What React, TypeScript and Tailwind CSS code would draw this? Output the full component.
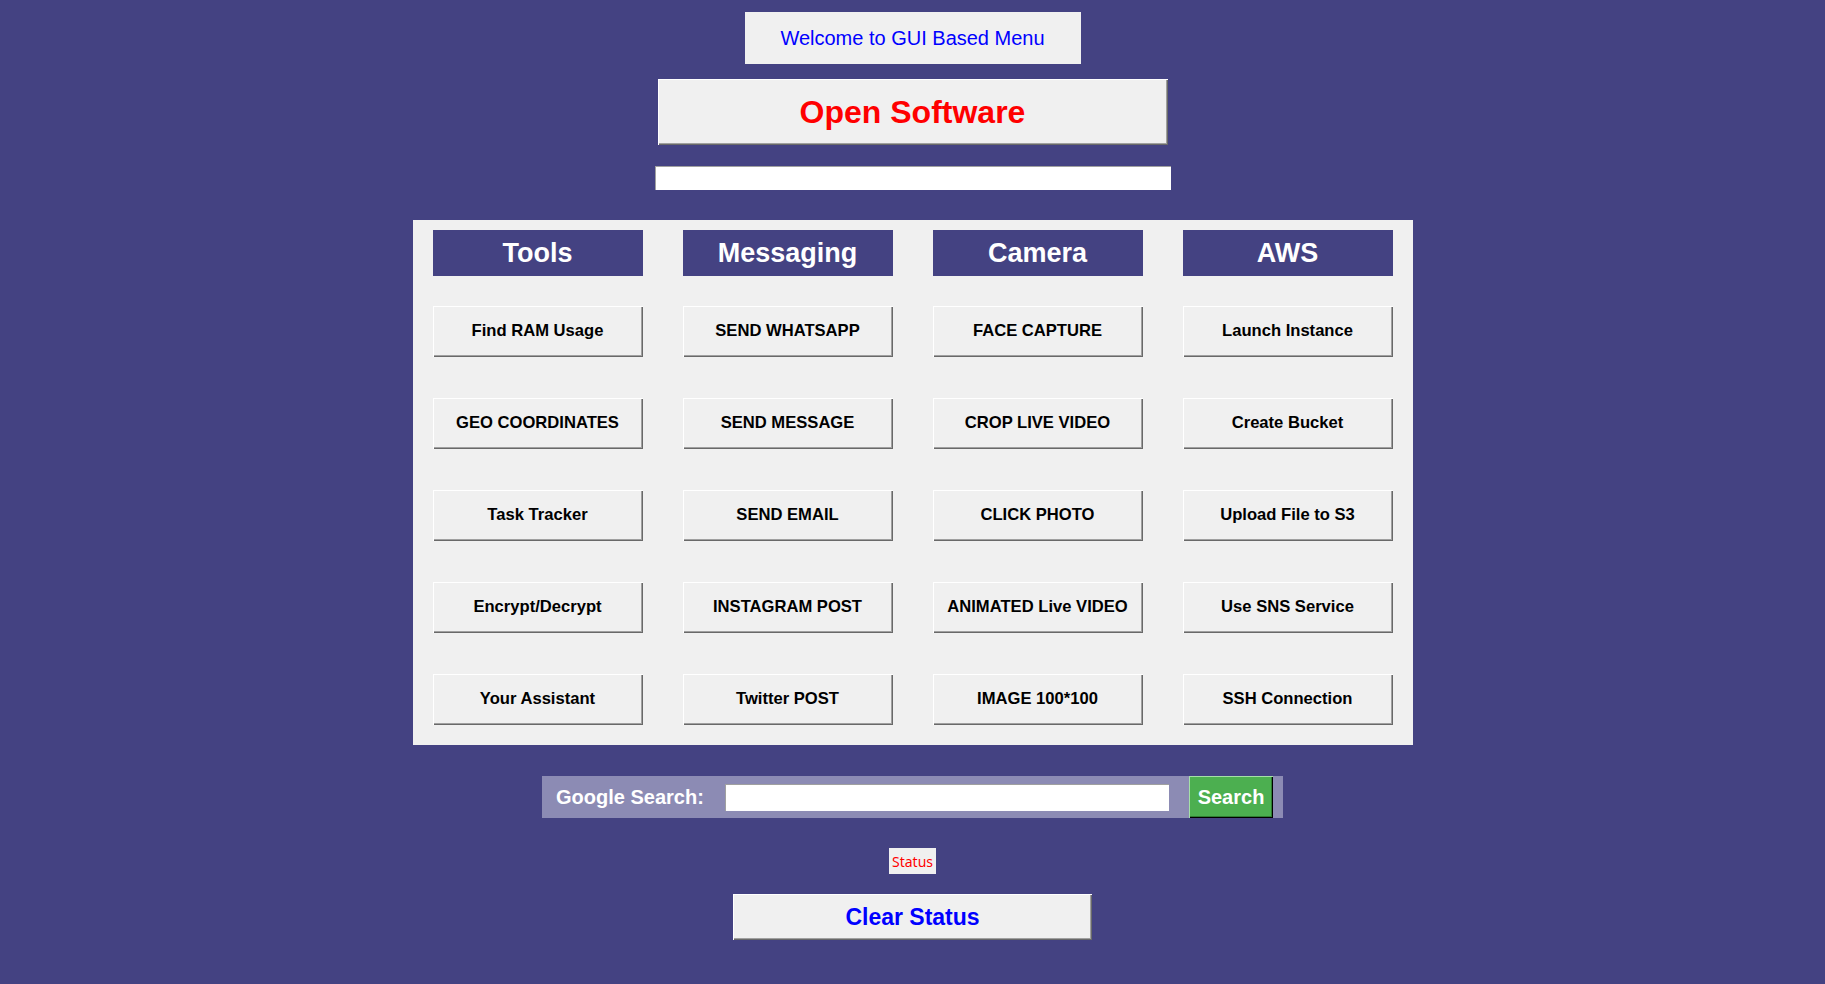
import React from "react";

const columns: { title: string; items: string[] }[] = [
  { title: "Tools", items: ["Find RAM Usage", "GEO COORDINATES", "Task Tracker", "Encrypt/Decrypt", "Your Assistant"] },
  { title: "Messaging", items: ["SEND WHATSAPP", "SEND MESSAGE", "SEND EMAIL", "INSTAGRAM POST", "Twitter POST"] },
  { title: "Camera", items: ["FACE CAPTURE", "CROP LIVE VIDEO", "CLICK PHOTO", "ANIMATED Live VIDEO", "IMAGE 100*100"] },
  { title: "AWS", items: ["Launch Instance", "Create Bucket", "Upload File to S3", "Use SNS Service", "SSH Connection"] },
];

const relief =
  "shadow-[inset_1px_1px_0_#ffffff,inset_-1px_-1px_0_#696969,inset_-2px_-2px_0_#a0a0a0]";

export default function App() {
  return (
    <div
      className="min-h-[984px] w-full bg-[#444282] flex flex-col items-center"
      style={{ fontFamily: '"Liberation Sans", Arial, sans-serif' }}
    >
      <div className="mt-[12px] w-[336px] h-[52px] bg-[#f0f0f0] flex items-center justify-center text-[20px] text-[#0000ff]">
        Welcome to GUI Based Menu
      </div>

      <button
        className={`mt-[15px] w-[510px] h-[66px] bg-[#f0f0f0] flex items-center justify-center text-[32px] font-bold text-[#ff0000] ${relief}`}
      >
        Open Software
      </button>

      <div className="mt-[21px] w-[516px] h-[24px] bg-white border-t border-l border-[#a0a0a0]" />

      <div className="mt-[30px] w-[1000px] bg-[#f0f0f0] px-[20px] pt-[10px] pb-[20px] grid grid-cols-4 gap-x-[40px]">
        {columns.map((col) => (
          <div key={col.title} className="flex flex-col">
            <div className="h-[46px] bg-[#444282] text-white font-bold text-[27px] flex items-center justify-center">
              {col.title}
            </div>
            <div className="mt-[30px] flex flex-col gap-[41px]">
              {col.items.map((it) => (
                <button
                  key={it}
                  className={`h-[51px] w-full bg-[#f0f0f0] flex items-center justify-center text-[16.6px] font-bold text-black ${relief}`}
                >
                  {it}
                </button>
              ))}
            </div>
          </div>
        ))}
      </div>

      <div className="mt-[31px] w-[741px] h-[42px] bg-[#8c8bb4] flex items-center">
        <span className="ml-[14px] w-[145px] text-white font-bold text-[20px] whitespace-nowrap">
          Google Search:
        </span>
        <div className="ml-[24px] w-[444px] h-[27px] bg-white border-t border-l border-[#a0a0a0]" />
        <button className="ml-[20px] w-[84px] h-[42px] bg-[#4caf50] text-white font-bold text-[20px] flex items-center justify-center shadow-[inset_1px_1px_0_#a5e0a8,inset_-1px_-1px_0_#000000,inset_-2px_-2px_0_#2e7d32]">
          Search
        </button>
      </div>

      <div
        className="mt-[30px] w-[47px] h-[26px] bg-[#f0f0f0] flex items-center justify-center text-[14px] text-[#ff0000]"
        style={{ fontFamily: '"Noto Sans", sans-serif' }}
      >
        Status
      </div>

      <button
        className={`mt-[20px] w-[359px] h-[46px] bg-[#f0f0f0] flex items-center justify-center text-[23px] font-bold text-[#0000ff] ${relief}`}
      >
        Clear Status
      </button>
    </div>
  );
}
